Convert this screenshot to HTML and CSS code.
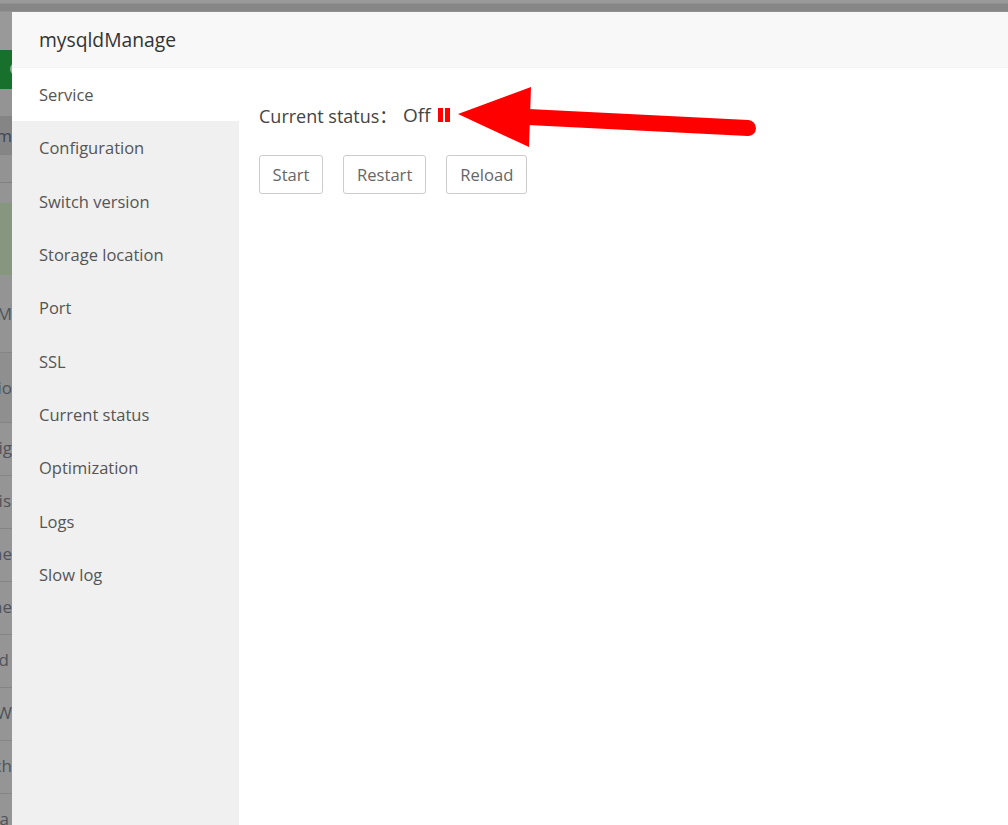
FILE: index.html
```html
<!DOCTYPE html>
<html lang="en">
<head>
<meta charset="utf-8">
<title>mysqldManage</title>
<link rel="stylesheet" href="styles.css">
</head>
<body>
<div class="page">
  <div class="topbar"></div>
  <div class="main">
    <div class="backdrop">
      <div class="bd bd-a"></div>
      <div class="bd bd-green"><i class="green-icon"></i></div>
      <div class="bd bd-b"></div>
      <div class="bd bd-head"><span>m</span></div>
      <div class="bd bd-c"></div>
      <div class="bd bd-d"></div>
      <div class="bd bd-pale"></div>
      <div class="bd bd-e"><span>M</span></div>
      <div class="bd bd-tall"><span>io</span></div>
      <div class="bd bd-row"><span>ig</span></div>
      <div class="bd bd-row"><span class="inset-1">is</span></div>
      <div class="bd bd-row"><span>he</span></div>
      <div class="bd bd-row"><span>he</span></div>
      <div class="bd bd-row"><span class="inset-3">d</span></div>
      <div class="bd bd-row"><span>W</span></div>
      <div class="bd bd-row"><span>ch</span></div>
      <div class="bd bd-row"><span class="inset-3">a</span></div>
    </div>
    <div class="modal">
      <header class="modal-title">mysqldManage</header>
      <div class="modal-body">
        <nav class="side">
          <a class="side-item active">Service</a>
          <a class="side-item">Configuration</a>
          <a class="side-item">Switch version</a>
          <a class="side-item">Storage location</a>
          <a class="side-item">Port</a>
          <a class="side-item">SSL</a>
          <a class="side-item">Current status</a>
          <a class="side-item">Optimization</a>
          <a class="side-item">Logs</a>
          <a class="side-item">Slow log</a>
        </nav>
        <section class="content">
          <div class="status">
            <span class="status-label">Current status：</span>
            <span class="status-value">Off</span>
            <svg class="pause" width="12" height="14" viewBox="0 0 12 14"><rect x="0" y="0" width="5" height="14" fill="#f00"/><rect x="7" y="0" width="5" height="14" fill="#f00"/></svg>
          </div>
          <div class="actions">
            <button class="btn btn-start">Start</button>
            <button class="btn">Restart</button>
            <button class="btn">Reload</button>
          </div>
        </section>
      </div>
    </div>
  </div>
  <svg class="arrow" width="310" height="70" viewBox="0 0 310 70">
    <line x1="70" y1="37" x2="290" y2="48" stroke="#f00" stroke-width="16" stroke-linecap="round"/>
    <polygon points="0,34 73,7 71,67" fill="#f00"/>
  </svg>
</div>
</body>
</html>
```
FILE: styles.css
```css
* { box-sizing: border-box; }
html, body { margin: 0; padding: 0; }
body {
  font-family: "Open Sans", "Noto Sans", "Noto Sans CJK SC", sans-serif;
  font-size: 16px;
  color: #555;
  background: #999;
}
.page {
  position: relative;
  width: 1008px;
  height: 825px;
  overflow: hidden;
  display: flex;
  flex-direction: column;
}
.topbar {
  height: 12px;
  flex: none;
  background: linear-gradient(#9a9a9a 0, #9a9a9a 3px, #868686 4px, #868686 11px, #9c9c9c 12px);
}
.main { flex: 1; display: flex; min-height: 0; }

.backdrop {
  width: 12px;
  flex: none;
  overflow: hidden;
  display: flex;
  flex-direction: column;
  background: #999;
}
.bd {
  flex: none;
  display: flex;
  align-items: center;
  justify-content: flex-end;
  white-space: nowrap;
  font-size: 17px;
  color: #50535a;
  border-bottom: 1px solid transparent;
}
.bd-a { height: 38px; background: #999; }
.bd-green { height: 39px; background: #17702c; }
.green-icon {
  display: block;
  width: 10px;
  height: 12px;
  margin-right: -8px;
  border-radius: 50%;
  background: #8fae96;
}
.bd-b { height: 27px; background: #949494; }
.bd-head { height: 39px; background: #858585; color: #3d4656; }
.bd-c { height: 28px; background: #939393; border-bottom-color: #808080; }
.bd-d { height: 20px; background: #949494; }
.bd-pale { height: 72px; background: #87977f; }
.bd-e { height: 78px; background: #949494; border-bottom-color: #858585; }
.bd-tall { height: 70px; background: #8f8f8f; border-bottom-color: #858585; }
.bd-row { height: 53px; padding-bottom: 4px; background: #959595; border-bottom-color: #858585; }
.bd span { display: block; }
.bd .inset-1 { margin-right: 1px; }
.bd .inset-3 { margin-right: 3px; }

.modal {
  flex: 1;
  min-width: 0;
  display: flex;
  flex-direction: column;
  background: #fff;
}
.modal-title {
  flex: none;
  height: 56px;
  padding-left: 27px;
  display: flex;
  align-items: center;
  background: #f8f8f8;
  border-bottom: 1px solid #f3f3f3;
  font-size: 19.3px;
  color: #333;
}
.modal-body { flex: 1; display: flex; min-height: 0; }
.side {
  flex: none;
  width: 227px;
  background: #f0f0f0;
  display: flex;
  flex-direction: column;
}
.side-item {
  flex: none;
  height: 53.33px;
  padding-left: 27px;
  display: flex;
  align-items: center;
  font-size: 16.5px;
  color: #555;
}
.side-item.active { background: #fff; }

.content { flex: 1; padding: 31px 20px 0; }
.status {
  display: flex;
  align-items: center;
  height: 32px;
  font-size: 18px;
  color: #444;
}
.status-label { width: 144px; flex: none; }
.status-value { font-size: 19px; margin-right: 7px; }
.pause { flex: none; display: block; }
.actions { display: flex; gap: 20px; margin-top: 24px; }
.btn {
  height: 39px;
  padding: 0 13px 1px;
  border: 1px solid #ccc;
  border-radius: 3px;
  background: #fff;
  font: inherit;
  font-size: 16.6px;
  color: #666;
}
.btn-start { width: 64px; padding: 0 0 1px; }
.arrow { position: absolute; left: 458px; top: 80px; }
```
